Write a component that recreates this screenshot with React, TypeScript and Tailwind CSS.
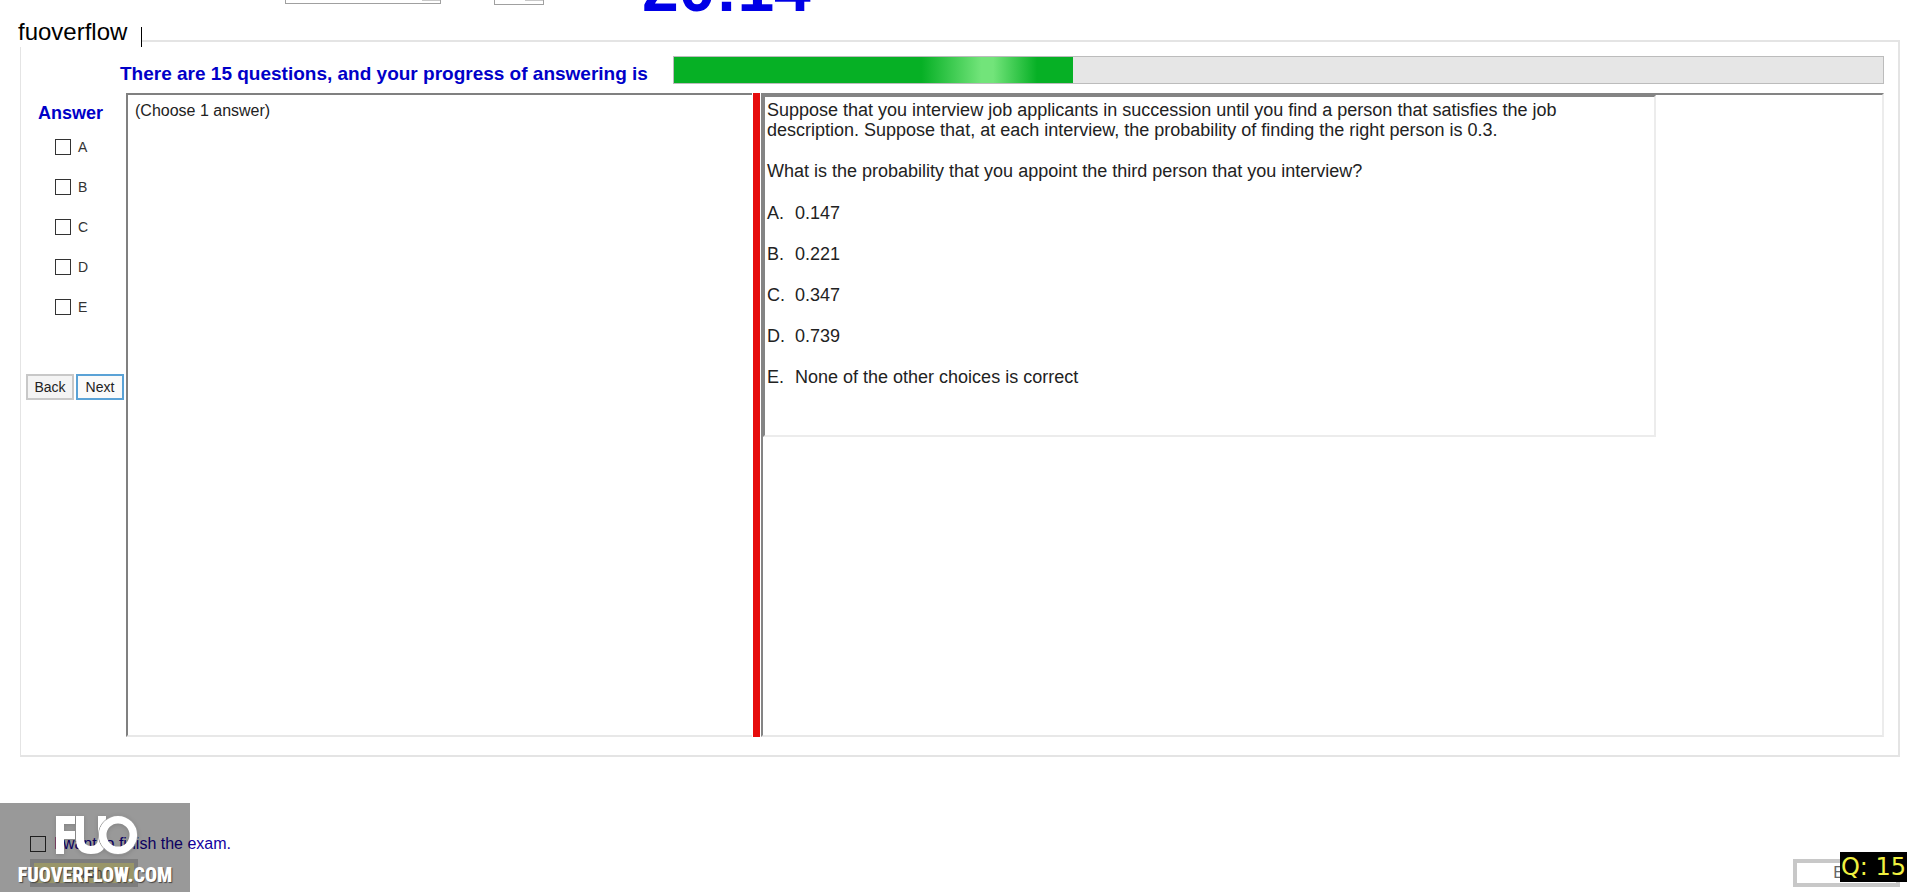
import { useState } from 'react';

const ANSWERS = ['A', 'B', 'C', 'D', 'E'];

const CHOICES = [
    { key: 'A', text: '0.147' },
    { key: 'B', text: '0.221' },
    { key: 'C', text: '0.347' },
    { key: 'D', text: '0.739' },
    { key: 'E', text: 'None of the other choices is correct' },
];

const checkboxClass = 'appearance-none w-4 h-4 shrink-0 bg-white border border-[#333] checked:bg-[#333]';
const selectClass =
    'appearance-none -mt-4 shrink-0 border border-[#a0a0a0] bg-[linear-gradient(#c8c8c8,#c8c8c8)] bg-no-repeat bg-[length:18px_16px] bg-[position:right_top]';

const TopBar = () => (
    <header className="h-10 pl-[285px] flex items-start overflow-hidden">
        <select aria-label="Font" className={`${selectClass} w-[156px] h-5`} />
        <select aria-label="Size" className={`${selectClass} ml-[53px] w-[50px] h-[21px]`} />
        <div className="-mt-12 ml-[98px] text-[66px] leading-[72px] font-bold text-[#0000e6]">20:14</div>
    </header>
);

const Progress = ({ value }: { value: number }) => (
    <div
        role="progressbar"
        aria-label="Progress of answering"
        aria-valuenow={value}
        className="flex-1 h-7 border border-[#bcbcbc] bg-[#e6e6e6]"
    >
        <div
            className="h-full bg-[linear-gradient(90deg,#06b025_62%,#72e47a_77%,#72e47a_80%,#06b025_91%)]"
            style={{ width: `${value}%` }}
        />
    </div>
);

const AnswerColumn = () => {
    const [picked, setPicked] = useState<string[]>([]);

    const toggle = (key: string) => {
        setPicked(prev => (prev.includes(key) ? prev.filter(k => k !== key) : [...prev, key]));
    };

    return (
        <aside className="w-[105px] shrink-0 flex flex-col">
            <h2 className="mt-2 pl-[17px] text-[18px] leading-6 font-bold text-[#0000c8]">Answer</h2>
            <div className="mt-[10px] pl-[34px] flex flex-col gap-4">
                {ANSWERS.map(key => (
                    <label key={key} className="h-6 flex items-center gap-[7px] text-[14px] leading-6 text-[#333]">
                        <input
                            type="checkbox"
                            className={checkboxClass}
                            checked={picked.includes(key)}
                            onChange={() => toggle(key)}
                        />
                        {key}
                    </label>
                ))}
            </div>
            <div className="mt-[55px] pl-[5px] flex gap-[2px] text-[14px] leading-5 text-[#222]">
                <button type="button" className="w-12 h-[26px] border-2 border-[#c8c8c8] bg-[#f4f4f4]">Back</button>
                <button type="button" className="w-12 h-[26px] border-2 border-[#5aa2d6] bg-[#fafafa]">Next</button>
            </div>
        </aside>
    );
};

const Question = () => (
    <div className="w-[893px] max-w-full h-[342px] border-2 border-t-[#848484] border-l-[#848484] border-r-[#ececec] border-b-[#ececec] pl-[2px] pt-[3px] text-[18px] leading-5 text-[#222]">
        <p>
            Suppose that you interview job applicants in succession until you find a person that satisfies the job
            <br />
            description. Suppose that, at each interview, the probability of finding the right person is 0.3.
        </p>
        <p className="mt-[21px]">What is the probability that you appoint the third person that you interview?</p>
        <ul className="mt-[22px] flex flex-col gap-[21px]">
            {CHOICES.map(c => (
                <li key={c.key} className="flex">
                    <span className="w-7">{c.key}.</span>
                    <span>{c.text}</span>
                </li>
            ))}
        </ul>
    </div>
);

const Watermark = () => (
    <div className="absolute left-0 bottom-0 w-[190px] h-[89px] bg-black/40 flex flex-col items-center pt-[13px]">
        <svg width="82" height="39" viewBox="0 0 82 39" className="ml-[3px] overflow-visible drop-shadow-sm" role="img" aria-label="FUO">
            <path d="M0 0H19V8H8V15H19V23H8V38H0Z" fill="#fff" />
            <path d="M20 0H28V23Q28 30 35 30Q42 30 42 22V0H50V24Q50 38 35 38Q20 38 20 23Z" fill="#fff" />
            <circle cx="62" cy="19" r="19.5" fill="none" stroke="#999" strokeWidth="1" />
            <circle cx="62" cy="19" r="15.3" fill="none" stroke="#fff" strokeWidth="7.6" />
        </svg>
        <div className="mt-2 font-['Impact','Roboto_Condensed','Liberation_Sans_Narrow',sans-serif] text-[20px] leading-6 font-black text-white [text-shadow:1px_1px_1px_#444]">
            FUOVERFLOW.COM
        </div>
    </div>
);

export default function App() {
    const [finish, setFinish] = useState(false);

    return (
        <div className="relative min-h-screen overflow-hidden bg-white font-['Liberation_Sans',Arial,sans-serif] flex flex-col">
            <TopBar />

            <main className="mx-5 border-2 border-l border-[#e4e4e4] pb-[18px] pr-[14px] flex flex-col">
                <div className="mt-[14px] ml-[99px] flex items-center">
                    <h1 className="w-[553px] shrink-0 pt-2 text-[19px] leading-5 font-bold text-[#0000c8]">
                        There are 15 questions, and your progress of answering is
                    </h1>
                    <Progress value={33} />
                </div>
                <div className="mt-[9px] h-[644px] flex">
                    <AnswerColumn />
                    <section className="w-[626px] shrink-0 border-t-2 border-l-2 border-[#808080] border-b-2 border-b-[#e8e8e8] pt-[6px] pl-[7px] text-[16px] leading-5 text-[#222]">
                        (Choose 1 answer)
                    </section>
                    <div className="w-[7px] ml-[1px] shrink-0 bg-[#e60c0c]" />
                    <section className="flex-1 min-w-0 ml-[1px] border-2 border-t-[#848484] border-l-[#848484] border-r-[#ececec] border-b-[#e8e8e8]">
                        <Question />
                    </section>
                </div>
            </main>

            <footer className="flex items-end justify-between pt-[77px] pl-[30px] pr-5">
                <div>
                    <label className="flex items-center gap-2 text-[16px] leading-5 text-[#1400a0]">
                        <input
                            type="checkbox"
                            className={checkboxClass}
                            checked={finish}
                            onChange={e => setFinish(e.target.checked)}
                        />
                        I want to finish the exam.
                    </label>
                    <button type="button" className="mt-[5px] w-[108px] h-7 border-4 border-[#d0d0d0] bg-[#fffab0] text-[14px] leading-5 text-[#777]">
                        Finish
                    </button>
                </div>
                <button type="button" className="w-[107px] h-7 border-4 border-[#c8c8c8] bg-white text-[16px] leading-5 text-[#666]">
                    Exit
                </button>
            </footer>

            <Watermark />
            {/* tab label laid over the corner of the frame */}
            <div className="absolute left-0 top-[9px] h-[38px] w-[142px] bg-white pl-[18px] pt-[9px] text-[24px] leading-7 text-black">
                fuoverflow
                <span className="absolute right-0 bottom-0 h-5 w-px bg-black" />
            </div>
            <div className="absolute right-[13px] bottom-[10px] h-[30px] w-[67px] bg-black font-['DejaVu_Sans',sans-serif] text-[24px] leading-[30px] text-[#f0f040] text-center whitespace-nowrap">
                Q: 15
            </div>
        </div>
    );
}
